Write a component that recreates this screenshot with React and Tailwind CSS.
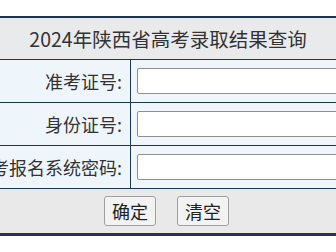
export default function App() {
  const rows = ['准考证号:', '身份证号:', '高考报名系统密码:'];

  return (
    <div
      className="flex justify-center overflow-hidden bg-white pt-4 text-[#333]"
      style={{ fontFamily: '"Noto Sans CJK SC", "Microsoft YaHei", sans-serif' }}
    >
      <div className="w-[420px] shrink-0 border-t-2 border-b-[3px] border-[#1c3654]">
        <div className="flex h-[42px] items-center justify-center border-b border-[#1c3654] bg-[#e9eaec] text-[19.5px]">
          2024年陕西省高考录取结果查询
        </div>

        {rows.map((label) => (
          <div key={label} className="grid h-[43px] grid-cols-[173px_1fr] border-b border-[#1c3654] bg-[#eef6fc]">
            <div className="flex items-center justify-end border-r border-[#1c3654] pr-2 text-[18px] whitespace-nowrap">
              {label}
            </div>
            <div className="flex items-center pl-[6px]">
              <input
                type="text"
                className="h-[26px] w-[230px] rounded-[2px] border border-[#8f8f8f] bg-white outline-none"
              />
            </div>
          </div>
        ))}

        <div className="flex h-[44px] items-center justify-center gap-[21px] bg-[#e9e9e9] pr-[3px]">
          <button className="h-[30px] w-[52px] rounded-[3px] border border-[#a0a0a0] bg-[#f3f3f3] text-[18px] text-[#222]">
            确定
          </button>
          <button className="h-[30px] w-[52px] rounded-[3px] border border-[#a0a0a0] bg-[#f3f3f3] text-[18px] text-[#222]">
            清空
          </button>
        </div>
      </div>
    </div>
  );
}
